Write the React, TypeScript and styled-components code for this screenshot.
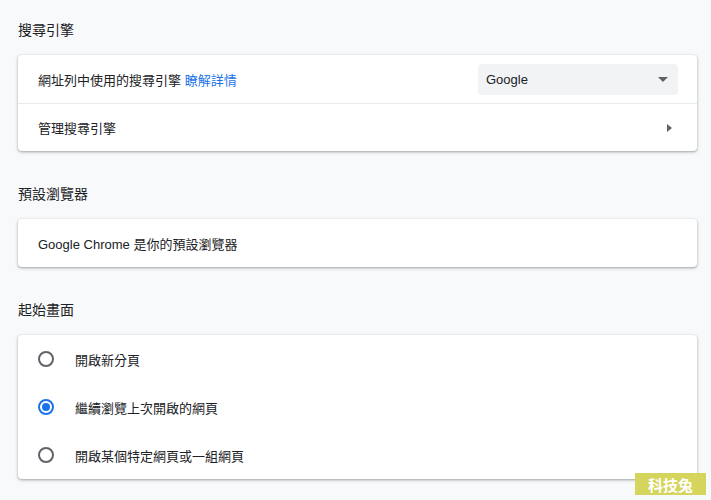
import styled, { createGlobalStyle } from 'styled-components';

const GlobalStyle = createGlobalStyle`
  html, body {
    margin: 0;
    padding: 0;
    background: #f8f9fa;
  }
  body {
    font-family: "Liberation Sans", "Noto Sans CJK TC", sans-serif;
    color: #202124;
    font-size: 13px;
  }
`;

const Page = styled.div`
  display: flex;
  flex-direction: column;
  gap: 16px;
  padding: 3px 14px 20px 18px;
  min-height: 500px;
  box-sizing: border-box;
`;

const Section = styled.section`
  display: flex;
  flex-direction: column;
`;

const Heading = styled.h2`
  margin: 0;
  height: 52px;
  display: flex;
  align-items: center;
  font-size: 14px;
  font-weight: 400;
  color: #202124;
`;

const Card = styled.div`
  background: #fff;
  border-radius: 4px;
  box-shadow: 0 1px 2px rgba(60, 64, 67, 0.3), 0 1px 3px 1px rgba(60, 64, 67, 0.15);
`;

const Row = styled.div<{ $divider?: boolean }>`
  height: 48px;
  display: flex;
  align-items: center;
  padding: 0 20px;
  box-sizing: border-box;
  border-top: ${(p) => (p.$divider ? '1px solid #e8eaed' : 'none')};
`;

const Label = styled.span`
  flex: 1;
`;

const Link = styled.a`
  color: #1a73e8;
  text-decoration: none;
`;

const Select = styled.div`
  width: 200px;
  height: 31px;
  border-radius: 4px;
  background: #f1f3f4;
  display: flex;
  align-items: center;
  justify-content: space-between;
  padding: 0 10px 0 8px;
  box-sizing: border-box;
  margin-right: -1px;
`;

const DownArrow = styled.span`
  width: 0;
  height: 0;
  border-left: 5px solid transparent;
  border-right: 5px solid transparent;
  border-top: 5px solid #5f6368;
`;

const RightArrow = styled.span`
  width: 0;
  height: 0;
  border-top: 4.5px solid transparent;
  border-bottom: 4.5px solid transparent;
  border-left: 5px solid #5f6368;
  margin-right: 5px;
`;

const RadioRow = styled(Row)`
  gap: 21px;
`;

const Radio = styled.span<{ $checked?: boolean }>`
  width: 16px;
  height: 16px;
  border-radius: 50%;
  box-sizing: border-box;
  border: 2px solid ${(p) => (p.$checked ? '#1a73e8' : '#5f6368')};
  display: flex;
  align-items: center;
  justify-content: center;
  &::after {
    content: '';
    width: 8px;
    height: 8px;
    border-radius: 50%;
    background: ${(p) => (p.$checked ? '#1a73e8' : 'transparent')};
  }
`;

const Watermark = styled.div`
  position: absolute;
  left: 635px;
  top: 473px;
  width: 71px;
  height: 22px;
  background: #d5d45c;
  color: #fff;
  font-family: "Noto Sans CJK TC", sans-serif;
  font-weight: 700;
  font-size: 15px;
  display: flex;
  align-items: center;
  justify-content: center;
  letter-spacing: 0;
`;

const startupOptions = [
  { label: '開啟新分頁', checked: false },
  { label: '繼續瀏覽上次開啟的網頁', checked: true },
  { label: '開啟某個特定網頁或一組網頁', checked: false },
];

const App = () => {
  return (
    <>
      <GlobalStyle />
      <Page>
        <Section>
          <Heading>搜尋引擎</Heading>
          <Card>
            <Row>
              <Label>
                網址列中使用的搜尋引擎 <Link href="#">瞭解詳情</Link>
              </Label>
              <Select>
                <span>Google</span>
                <DownArrow />
              </Select>
            </Row>
            <Row $divider>
              <Label>管理搜尋引擎</Label>
              <RightArrow />
            </Row>
          </Card>
        </Section>
        <Section>
          <Heading>預設瀏覽器</Heading>
          <Card>
            <Row>
              <Label>Google Chrome 是你的預設瀏覽器</Label>
            </Row>
          </Card>
        </Section>
        <Section>
          <Heading>起始畫面</Heading>
          <Card>
            {startupOptions.map((option) => (
              <RadioRow key={option.label}>
                <Radio $checked={option.checked} />
                <Label>{option.label}</Label>
              </RadioRow>
            ))}
          </Card>
        </Section>
      </Page>
      <Watermark>科技兔</Watermark>
    </>
  );
};

export default App;
